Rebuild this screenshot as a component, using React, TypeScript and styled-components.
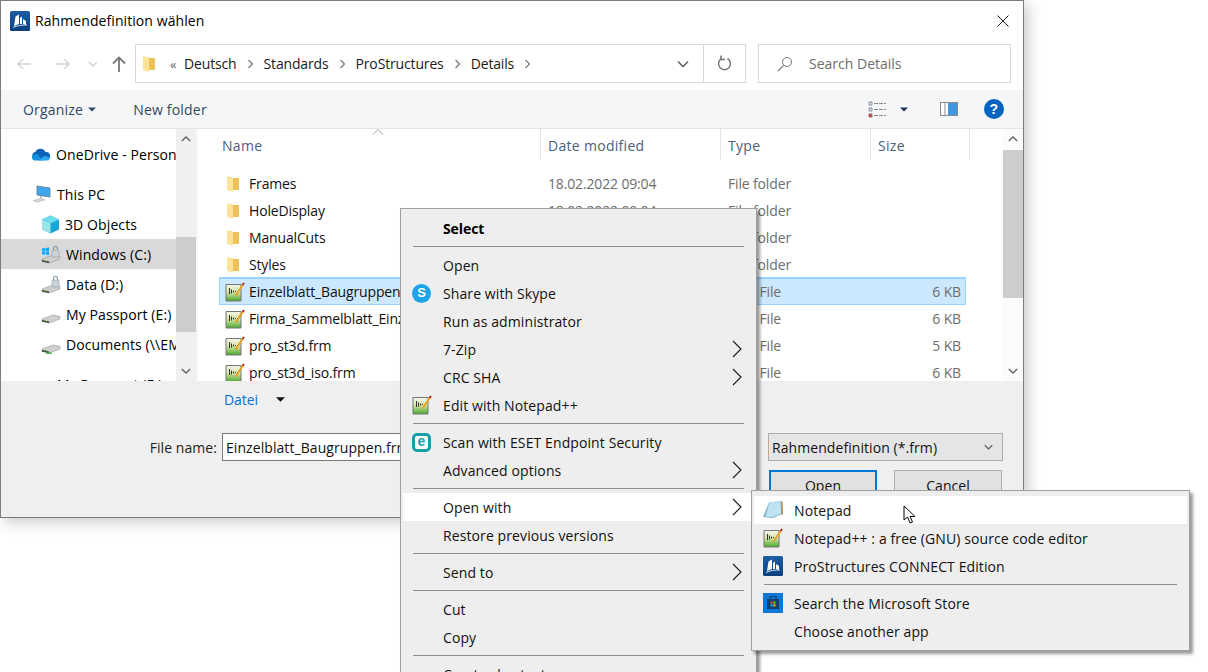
import React from 'react';
import styled, { createGlobalStyle } from 'styled-components';

const GlobalStyle = createGlobalStyle`
  html, body {
    margin: 0;
    padding: 0;
    background: #fff;
    overflow: hidden;
  }
  body {
    font-family: "Open Sans", "Liberation Sans", sans-serif;
    font-size: 14px;
    color: #000;
  }
  * { box-sizing: border-box; }
`;

const Screen = styled.div`
  position: relative;
  width: 1208px;
  height: 672px;
  overflow: hidden;
  background: #fff;
`;

/* ---- dialog ---- */
const Dialog = styled.div`
  width: 1024px;
  height: 518px;
  border: 1px solid #7c7c7c;
  background: #fff;
  box-shadow: 4px 4px 14px rgba(0, 0, 0, 0.22);
  display: flex;
  flex-direction: column;
`;
const TitleBar = styled.div`
  height: 39px;
  flex: none;
  display: flex;
  align-items: center;
  padding: 0 14px 0 9px;
  gap: 5px;
  letter-spacing: 0.08px;
`;
const TitleText = styled.div`
  flex: 1;
  font-size: 14px;
`;
const NavRow = styled.div`
  height: 50px;
  flex: none;
  display: flex;
  align-items: flex-start;
  padding: 4px 12px 0 0;
`;
const NavButtons = styled.div`
  width: 134px;
  height: 39px;
  flex: none;
  display: flex;
  align-items: center;
  padding: 1px 0 0 15px;
`;
const AddressBar = styled.div`
  width: 611px;
  height: 39px;
  flex: none;
  border: 1px solid #d9d9d9;
  display: flex;
  align-items: center;
  padding-left: 5px;
`;
const Crumbs = styled.div`
  flex: 1;
  display: flex;
  align-items: center;
  font-size: 14px;
  color: #1a1a1a;
  letter-spacing: -0.15px;
`;
const Chevrons = styled.span`
  color: #666;
  font-size: 13px;
  width: 28px;
  padding-left: 14px;
`;
const CrumbSep = styled.span`
  width: 27px;
  display: flex;
  justify-content: center;
`;
const AddressTail = styled.div`
  width: 44px;
  padding-left: 4px;
  display: flex;
  justify-content: center;
`;
const RefreshCell = styled.div`
  width: 42px;
  height: 37px;
  border-left: 1px solid #d9d9d9;
  display: flex;
  align-items: center;
  justify-content: center;
`;
const SearchBox = styled.div`
  width: 253px;
  height: 39px;
  margin-left: 12px;
  flex: none;
  border: 1px solid #d9d9d9;
  display: flex;
  align-items: center;
  padding-left: 18px;
  gap: 16px;
  color: #6d6d6d;
  font-size: 14px;
  letter-spacing: 0;
`;
const CommandBar = styled.div`
  height: 39px;
  flex: none;
  background: #f5f6f7;
  border-bottom: 1px solid #e3e4e5;
  display: flex;
  align-items: center;
  padding: 0 19px 0 22px;
  color: #2f4a68;
  font-size: 14px;
  letter-spacing: 0.2px;
`;
const CommandItem = styled.div<{ $gap?: number }>`
  display: flex;
  align-items: center;
  gap: 5px;
  margin-right: ${p => p.$gap ?? 0}px;
`;
const Spring = styled.div`
  flex: 1;
`;
const Main = styled.div`
  height: 252px;
  flex: none;
  display: flex;
  overflow: hidden;
`;
const NavPane = styled.div`
  width: 175px;
  flex: none;
  padding-top: 10px;
  font-size: 14px;
  letter-spacing: 0.1px;
`;
const NavItem = styled.div<{ $indent: number; $active?: boolean; $gapTop?: boolean }>`
  height: 30px;
  display: flex;
  align-items: center;
  white-space: nowrap;
  overflow: hidden;
  padding-left: ${p => p.$indent}px;
  gap: 5px;
  margin-top: ${p => (p.$gapTop ? 10 : 0)}px;
  background: ${p => (p.$active ? '#d9d9d9' : 'transparent')};
  svg { flex: none; }
`;
const Scrollbar = styled.div<{ $track: string }>`
  width: 20px;
  flex: none;
  background: ${p => p.$track};
  display: flex;
  flex-direction: column;
  align-items: stretch;
`;
const ScrollArrow = styled.div`
  height: 20px;
  flex: none;
  display: flex;
  align-items: center;
  justify-content: center;
`;
const ScrollThumb = styled.div<{ $top: number; $height: number }>`
  margin-top: ${p => p.$top}px;
  height: ${p => p.$height}px;
  flex: none;
  background: #cdcdcd;
`;
const ScrollFill = styled.div`
  flex: 1;
`;
const FileList = styled.div`
  position: relative;
  flex: 1;
  font-size: 14px;
  letter-spacing: -0.15px;
  border-left: 2px solid #f6f6f6;
`;
const HeaderRow = styled.div`
  height: 31px;
  display: grid;
  grid-template-columns: 342px 180px 150px 100px;
  color: #4c607a;
  margin-bottom: 10px;
  letter-spacing: 0.3px;
`;
const HeaderCell = styled.div<{ $first?: boolean; $last?: boolean }>`
  display: flex;
  align-items: center;
  padding-left: ${p => (p.$first ? 24 : 7)}px;
  padding-top: 2px;
  border-left: ${p => (p.$first ? 'none' : '1px solid #e5e5e5')};
  border-right: ${p => (p.$last ? '1px solid #e5e5e5' : 'none')};
`;
const SortCaret = styled.svg`
  position: absolute;
  left: 174px;
  top: 0;
`;
const FileRow = styled.div<{ $selected?: boolean }>`
  height: 27px;
  width: 747px;
  margin-left: 21px;
  padding: 0 5px 0 6px;
  display: grid;
  grid-template-columns: 24px 299px 180px 1fr 50px;
  align-items: center;
  white-space: nowrap;
  background: ${p => (p.$selected ? '#cce8ff' : 'transparent')};
  box-shadow: ${p => (p.$selected ? 'inset 0 0 0 1px #99d1ff, 0 -1px 0 #99d1ff' : 'none')};
`;
const FileName = styled.div`
  color: #111;
  overflow: hidden;
`;
const FileMeta = styled.div<{ $right?: boolean }>`
  color: #6d6d6d;
  text-align: ${p => (p.$right ? 'right' : 'left')};
`;
const Footer = styled.div`
  flex: 1;
  background: #efefef;
  font-size: 14px;
  letter-spacing: 0.07px;
  padding-top: 7px;
`;
const FooterLink = styled.div`
  height: 22px;
  display: flex;
  align-items: center;
  margin-left: 223px;
  gap: 18px;
  color: #0a6fd8;
  letter-spacing: -0.1px;
`;
const FileNameRow = styled.div`
  display: flex;
  align-items: center;
  margin-top: 23px;
  height: 28px;
`;
const FieldLabel = styled.div`
  width: 221px;
  padding-right: 5px;
  text-align: right;
  color: #222;
`;
const FieldInput = styled.div`
  width: 530px;
  height: 28px;
  flex: none;
  border: 1px solid #7a7a7a;
  background: #fff;
  padding-left: 3px;
  display: flex;
  align-items: center;
  color: #111;
`;
const TypeSelect = styled.div`
  width: 235px;
  height: 28px;
  margin-left: 16px;
  flex: none;
  border: 1px solid #adadad;
  background: #e5e5e5;
  display: flex;
  align-items: center;
  justify-content: space-between;
  padding: 0 9px 0 3px;
  color: #111;
`;
const ButtonRow = styled.div`
  display: flex;
  margin: 9px 0 0 768px;
  gap: 17px;
`;
const DialogButton = styled.div<{ $primary?: boolean }>`
  width: 108px;
  height: 30px;
  background: #e1e1e1;
  border: ${p => (p.$primary ? '2px solid #0078d7' : '1px solid #adadad')};
  display: flex;
  align-items: center;
  justify-content: center;
  color: #111;
`;

/* ---- context menus ---- */
const Menu = styled.div<{ $x: number; $y: number; $w: number }>`
  position: absolute;
  left: ${p => p.$x}px;
  top: ${p => p.$y}px;
  width: ${p => p.$w}px;
  background: #eeeeee;
  border: 1px solid #a0a0a0;
  padding: 5px 2px;
  box-shadow: 3px 3px 3px rgba(0, 0, 0, 0.4);
  font-size: 14px;
  letter-spacing: 0.1px;
  color: #111;
`;
const MenuRow = styled.div<{ $hot?: boolean; $bold?: boolean }>`
  height: 28px;
  display: flex;
  align-items: center;
  white-space: nowrap;
  background: ${p => (p.$hot ? '#fff' : 'transparent')};
  font-weight: ${p => (p.$bold ? 700 : 400)};
  color: ${p => (p.$bold ? '#000' : 'inherit')};
  letter-spacing: ${p => (p.$bold ? '-0.1px' : 'inherit')};
`;
const MenuIcon = styled.div`
  width: 40px;
  padding-left: 9px;
  flex: none;
  display: flex;
  align-items: center;
`;
const MenuLabel = styled.div`
  flex: 1;
`;
const MenuArrow = styled.svg`
  margin-right: 12px;
  flex: none;
`;
const MenuSep = styled.div`
  height: 1px;
  background: #8f8f8f;
  margin: 4px 10px 4px 10px;
`;
const Badge = styled.div<{ $bg: string; $radius: number }>`
  width: 19px;
  height: 19px;
  border-radius: ${p => p.$radius}px;
  background: ${p => p.$bg};
  color: #fff;
  font-family: "Liberation Sans", sans-serif;
  font-weight: 700;
  font-size: 13px;
  line-height: 18px;
  text-align: center;
  letter-spacing: 0;
`;
const EsetBadge = styled(Badge)`
  background: #fff;
  border: 3px solid #18a0a8;
  color: #18a0a8;
  line-height: 11px;
  font-size: 14px;
`;
const Pointer = styled.svg`
  position: absolute;
  left: 903px;
  top: 505px;
`;

/* ---- drawn icons ---- */
const Folder = () => (
  <svg width="14" height="18" viewBox="0 0 14 18" style={{ marginLeft: 1 }}>
    <path d="M1 2h5l2 2h5v11H1z" fill="#f3cd6b" />
    <path d="M1 1l6 2v14l-6-2z" fill="#fde398" />
    <path d="M7 3h6v12H7z" fill="#eec15a" />
  </svg>
);

const FrmIcon = ({ size = 20 }: { size?: number }) => (
  <svg width={size} height={size} viewBox="0 0 20 20">
    <defs>
      <linearGradient id="frmFill" x1="0" y1="0" x2="0" y2="1">
        <stop offset="0" stopColor="#f4f4ee" />
        <stop offset="0.45" stopColor="#d8e8a8" />
        <stop offset="1" stopColor="#49a62e" />
      </linearGradient>
    </defs>
    <path d="M1 2.500h15v16.500H1z" fill="url(#frmFill)" stroke="#777" />
    <path d="M4.500 6v6M6.500 7.500v4M8.500 8.500v2M10.500 9v1" stroke="#333" strokeWidth="1" />
    <path d="M10.500 13.500L18 2.500" stroke="#e8a020" strokeWidth="2" />
    <path d="M17.500 3L19 1" stroke="#b02a20" strokeWidth="2" />
  </svg>
);

const ProLogo = () => (
  <svg width="20" height="20" viewBox="0 0 20 20">
    <defs>
      <linearGradient id="proFill" x1="0" y1="0" x2="0" y2="1">
        <stop offset="0" stopColor="#1d5ea6" />
        <stop offset="1" stopColor="#0c3f80" />
      </linearGradient>
    </defs>
    <rect width="20" height="20" rx="1.500" fill="url(#proFill)" />
    <path d="M4 15l1.500-9.500L9 3.500v9.500zM10 13V7l2-1.500V13zM13 13V8l3 2v4z" fill="#fff" />
    <path d="M3 16.500c4-2 9-2.600 14-2.500" stroke="#cfe0f2" strokeWidth="1" fill="none" />
  </svg>
);

const OneDrive = () => (
  <svg width="21" height="14" viewBox="0 0 21 14">
    <path d="M6 13a4 4 0 0 1-.6-7.900A5.500 5.500 0 0 1 15.400 5a4 4 0 0 1 1.200 8z" fill="#0a62b8" />
    <path d="M4 13.500a3.200 3.200 0 0 1 1-6.200h2.500l6 6.200z" fill="#1490df" />
    <path d="M9 13.500l5-4.500 4 .5a2.200 2.200 0 0 1 .4 4z" fill="#28a8ea" />
  </svg>
);

const ThisPc = () => (
  <svg width="20" height="18" viewBox="0 0 20 18">
    <path d="M5 1l13 2v9l-13-2z" fill="#3fa6ec" stroke="#5b7f99" strokeWidth=".8" />
    <path d="M1 15.500l8-2 4 1.300-8 2.400z" fill="#d6d6d6" stroke="#aaa" strokeWidth=".5" />
    <path d="M9 11v2" stroke="#888" />
  </svg>
);

const Cube = () => (
  <svg width="19" height="19" viewBox="0 0 19 19">
    <path d="M9.500 .5L18 4.500v10l-8.500 4-8.500-4v-10z" fill="#1aa6d6" />
    <path d="M9.500 .5L18 4.500 9.500 8.500 1 4.500z" fill="#6fdcee" />
    <path d="M1 4.500l8.500 4v10l-8.500-4z" fill="#9ce6ea" />
  </svg>
);

const Drive = ({ lock, windows, net }: { lock?: boolean; windows?: boolean; net?: boolean }) => (
  <svg width="20" height="19" viewBox="0 0 20 19">
    <path d="M1 14l11-4 7 1.500v2.500L8 18l-7-1.500z" fill="#cfcfcf" stroke="#8a8a8a" strokeWidth=".5" />
    <path d="M1 15v1.600L8 18v-1.600z" fill="#3c3c3c" />
    <path d="M3 15.500l3 .5" stroke={net ? '#3fb54a' : '#7cc242'} strokeWidth="1" />
    {net && <path d="M5 17.500h6v1.400H5z" fill="#3fb54a" />}
    {lock && (
      <g>
        <path d="M12.500 5V3.400a2 2 0 0 1 4 0V5" stroke="#8da0ad" fill="none" strokeWidth="1.200" />
        <rect x="11" y="5" width="7" height="7" rx=".8" fill="#c9d3da" stroke="#8da0ad" strokeWidth=".6" />
      </g>
    )}
    {windows && (
      <path d="M1 3.400l3-.4v3H1zM4.600 3l3.400-.5V6H4.600zM1 6.600h3v3l-3-.4zM4.600 6.600H8v3.500l-3.400-.5z" fill="#12a4ee" />
    )}
  </svg>
);

const NotepadIcon = () => (
  <svg width="20" height="20" viewBox="0 0 20 20">
    <path d="M6 2.500L18 1l1 13-9 4-10-1z" fill="#7fb6cc" />
    <path d="M6.500 2.500L17.500 1.200l.8 12.300-8.800 3.500-7-.5z" fill="#bfe3f0" />
    <path d="M18 1l1.500 1 .5 12-1.500 1z" fill="#a8824f" />
  </svg>
);

const StoreIcon = () => (
  <svg width="20" height="20" viewBox="0 0 20 20">
    <rect width="20" height="20" fill="#0a78d6" />
    <path d="M4 6h12v10H4z" fill="#123f74" />
    <path d="M7 6V3.500h6V6" stroke="#123f74" fill="none" strokeWidth="1.200" />
    <path d="M7.500 8.500h2.200v2.200H7.500z" fill="#f25022" />
    <path d="M10.300 8.500h2.200v2.200h-2.200z" fill="#7fba00" />
    <path d="M7.500 11.300h2.200v2.200H7.500z" fill="#00a4ef" />
    <path d="M10.300 11.300h2.200v2.200h-2.200z" fill="#ffb900" />
  </svg>
);

const ChevronRight = ({ color = '#777' }: { color?: string }) => (
  <svg width="7" height="10" viewBox="0 0 7 10">
    <path d="M1.500 1l4 4-4 4" fill="none" stroke={color} strokeWidth="1.200" />
  </svg>
);

const ChevronV = ({ up, color = '#666', width = 12 }: { up?: boolean; color?: string; width?: number }) => (
  <svg width={width} height="8" viewBox="0 0 12 8">
    <path d={up ? 'M1 6.500l5-5 5 5' : 'M1 1.500l5 5 5-5'} fill="none" stroke={color} strokeWidth="1.600" />
  </svg>
);

const SubArrow = () => (
  <MenuArrow width="10" height="18" viewBox="0 0 10 18">
    <path d="M1 1l8 8-8 8" fill="none" stroke="#1a1a1a" strokeWidth="1.100" />
  </MenuArrow>
);

const DownCaret = ({ color, width = 10 }: { color: string; width?: number }) => (
  <svg width={width} height="5" viewBox="0 0 10 5">
    <path d="M0 0h10L5 5z" fill={color} />
  </svg>
);

const HArrow = ({ left, ml }: { left?: boolean; ml: number }) => (
  <svg width="16" height="12" viewBox="0 0 16 12" style={{ marginLeft: ml }}>
    <path d={left ? 'M15 6H2M7 1L2 6l5 5' : 'M1 6h13M9 1l5 5-5 5'} fill="none" stroke="#d2d2d2" strokeWidth="1.400" />
  </svg>
);

const navItems = [
  { label: 'OneDrive - Personal', indent: 29, icon: <OneDrive /> },
  { label: 'This PC', indent: 31, icon: <ThisPc />, gapTop: true },
  { label: '3D Objects', indent: 40, icon: <Cube /> },
  { label: 'Windows (C:)', indent: 40, icon: <Drive lock windows />, active: true },
  { label: 'Data (D:)', indent: 40, icon: <Drive lock /> },
  { label: 'My Passport (E:)', indent: 40, icon: <Drive /> },
  { label: 'Documents (\\\\EMEA)', indent: 40, icon: <Drive net /> },
  { label: 'My Passport (E:)', indent: 31, icon: <Drive />, gapTop: true },
];

const files = [
  { name: 'Frames', date: '18.02.2022 09:04', type: 'File folder', size: '', folder: true },
  { name: 'HoleDisplay', date: '18.02.2022 09:04', type: 'File folder', size: '', folder: true },
  { name: 'ManualCuts', date: '18.02.2022 09:04', type: 'File folder', size: '', folder: true },
  { name: 'Styles', date: '18.02.2022 09:04', type: 'File folder', size: '', folder: true },
  { name: 'Einzelblatt_Baugruppen.frm', date: '18.02.2022 09:04', type: 'FRM File', size: '6 KB', selected: true },
  { name: 'Firma_Sammelblatt_Einzelteile.frm', date: '18.02.2022 09:04', type: 'FRM File', size: '6 KB' },
  { name: 'pro_st3d.frm', date: '18.02.2022 09:04', type: 'FRM File', size: '5 KB' },
  { name: 'pro_st3d_iso.frm', date: '18.02.2022 09:04', type: 'FRM File', size: '6 KB' },
];

type Entry =
  | 'sep'
  | { label: string; icon?: React.ReactNode; sub?: boolean; hot?: boolean; bold?: boolean };

const contextMenu: Entry[] = [
  { label: 'Select', bold: true },
  'sep',
  { label: 'Open' },
  { label: 'Share with Skype', icon: <Badge $bg="#1ba5e8" $radius={10}>S</Badge> },
  { label: 'Run as administrator' },
  { label: '7-Zip', sub: true },
  { label: 'CRC SHA', sub: true },
  { label: 'Edit with Notepad++', icon: <FrmIcon /> },
  'sep',
  { label: 'Scan with ESET Endpoint Security', icon: <EsetBadge $bg="#fff" $radius={5}>e</EsetBadge> },
  { label: 'Advanced options', sub: true },
  'sep',
  { label: 'Open with', sub: true, hot: true },
  { label: 'Restore previous versions' },
  'sep',
  { label: 'Send to', sub: true },
  'sep',
  { label: 'Cut' },
  { label: 'Copy' },
  'sep',
  { label: 'Create shortcut' },
];

const openWithMenu: Entry[] = [
  { label: 'Notepad', icon: <NotepadIcon />, hot: true },
  { label: 'Notepad++ : a free (GNU) source code editor', icon: <FrmIcon /> },
  { label: 'ProStructures CONNECT Edition', icon: <ProLogo /> },
  'sep',
  { label: 'Search the Microsoft Store', icon: <StoreIcon /> },
  { label: 'Choose another app' },
];

const renderEntries = (entries: Entry[]) =>
  entries.map((entry, i) =>
    entry === 'sep' ? (
      <MenuSep key={i} />
    ) : (
      <MenuRow key={i} $hot={entry.hot} $bold={entry.bold}>
        <MenuIcon>{entry.icon}</MenuIcon>
        <MenuLabel>{entry.label}</MenuLabel>
        {entry.sub && <SubArrow />}
      </MenuRow>
    )
  );

export default function App() {
  return (
    <Screen>
      <GlobalStyle />
      <Dialog>
        <TitleBar>
          <ProLogo />
          <TitleText>Rahmendefinition wählen</TitleText>
          <svg width="12" height="12" viewBox="0 0 12 12">
            <path d="M.5.5l11 11M11.500.5l-11 11" stroke="#222" strokeWidth="1" />
          </svg>
        </TitleBar>

        <NavRow>
          <NavButtons>
            <HArrow left ml={0} />
            <HArrow ml={23} />
            <svg width="10" height="6" viewBox="0 0 10 6" style={{ marginLeft: 17 }}>
              <path d="M1 1l4 4 4-4" fill="none" stroke="#d2d2d2" strokeWidth="1.400" />
            </svg>
            <svg width="14" height="16" viewBox="0 0 14 16" style={{ marginLeft: 14 }}>
              <path d="M7 16V2M1 7.500L7 1.500l6 6" fill="none" stroke="#777" strokeWidth="1.800" />
            </svg>
          </NavButtons>
          <AddressBar>
            <Folder />
            <Crumbs>
              <Chevrons>«</Chevrons>
              Deutsch
              <CrumbSep><ChevronRight /></CrumbSep>
              Standards
              <CrumbSep><ChevronRight /></CrumbSep>
              ProStructures
              <CrumbSep><ChevronRight /></CrumbSep>
              Details
              <CrumbSep><ChevronRight /></CrumbSep>
            </Crumbs>
            <AddressTail><ChevronV /></AddressTail>
            <RefreshCell>
              <svg width="15" height="17" viewBox="0 0 15 17">
                <path d="M10.500 3.500a6 6 0 1 1-6 0" fill="none" stroke="#777" strokeWidth="1.500" />
                <path d="M4 .5v4h4" fill="none" stroke="#777" strokeWidth="1.500" />
              </svg>
            </RefreshCell>
          </AddressBar>
          <SearchBox>
            <svg width="16" height="16" viewBox="0 0 16 16">
              <circle cx="10" cy="6" r="4.500" fill="none" stroke="#777" strokeWidth="1" />
              <path d="M6.700 9.300L1 15" stroke="#777" strokeWidth="1.200" />
            </svg>
            Search Details
          </SearchBox>
        </NavRow>

        <CommandBar>
          <CommandItem $gap={37}>Organize <DownCaret color="#2f4a68" width={8} /></CommandItem>
          <CommandItem>New folder</CommandItem>
          <Spring />
          <CommandItem $gap={32}>
            <svg width="19" height="17" viewBox="0 0 19 17">
              <path d="M1 1h3v3H1zM1 7h3v3H1z" fill="#dfe6ee" stroke="#6f7f90" strokeWidth=".8" />
              <path d="M1 13h3v3H1z" fill="#d9534f" stroke="#8a5050" strokeWidth=".8" />
              <path d="M6 2.500h12M6 8.500h12M6 14.500h12" stroke="#8a8a8a" strokeDasharray="4 1" />
            </svg>
            <span style={{ width: 3 }} />
            <DownCaret color="#1e395b" width={8} />
          </CommandItem>
          <CommandItem $gap={26}>
            <svg width="18" height="14" viewBox="0 0 18 14">
              <rect x=".5" y=".5" width="17" height="13" fill="#fff" stroke="#8a8a8a" />
              <rect x="8" y="1" width="9" height="12" fill="#3f97e0" />
              <path d="M5 1v12" stroke="#8a8a8a" />
            </svg>
          </CommandItem>
          <svg width="20" height="20" viewBox="0 0 20 20">
            <circle cx="10" cy="10" r="10" fill="#0563c1" />
            <text x="10" y="15" textAnchor="middle" fill="#fff" fontSize="14" fontWeight="700" fontFamily="Liberation Sans, sans-serif">?</text>
          </svg>
        </CommandBar>

        <Main>
          <NavPane>
            {navItems.map((item, i) => (
              <NavItem key={i} $indent={item.indent} $active={item.active} $gapTop={item.gapTop}>
                {item.icon}
                {item.label}
              </NavItem>
            ))}
          </NavPane>
          <Scrollbar $track="#f0f0f0">
            <ScrollArrow><ChevronV up color="#606060" width={10} /></ScrollArrow>
            <ScrollThumb $top={88} $height={95} />
            <ScrollFill />
            <ScrollArrow><ChevronV color="#606060" width={10} /></ScrollArrow>
          </Scrollbar>
          <FileList>
            <SortCaret width="12" height="6" viewBox="0 0 12 6">
              <path d="M1 5.500l5-5 5 5" fill="none" stroke="#a0a0a0" />
            </SortCaret>
            <HeaderRow>
              <HeaderCell $first>Name</HeaderCell>
              <HeaderCell>Date modified</HeaderCell>
              <HeaderCell>Type</HeaderCell>
              <HeaderCell $last>Size</HeaderCell>
            </HeaderRow>
            {files.map(file => (
              <FileRow key={file.name} $selected={file.selected}>
                {file.folder ? <Folder /> : <FrmIcon />}
                <FileName>{file.name}</FileName>
                <FileMeta>{file.date}</FileMeta>
                <FileMeta>{file.type}</FileMeta>
                <FileMeta $right>{file.size}</FileMeta>
              </FileRow>
            ))}
          </FileList>
          <Scrollbar $track="#fbfbfb">
            <ScrollArrow><ChevronV up color="#606060" width={10} /></ScrollArrow>
            <ScrollThumb $top={1} $height={148} />
            <ScrollFill />
            <ScrollArrow><ChevronV color="#606060" width={10} /></ScrollArrow>
          </Scrollbar>
        </Main>

        <Footer>
          <FooterLink>Datei <DownCaret color="#111" width={9} /></FooterLink>
          <FileNameRow>
            <FieldLabel>File name:</FieldLabel>
            <FieldInput>Einzelblatt_Baugruppen.frm</FieldInput>
            <TypeSelect>
              Rahmendefinition (*.frm)
              <ChevronV color="#555" width={9} />
            </TypeSelect>
          </FileNameRow>
          <ButtonRow>
            <DialogButton $primary>Open</DialogButton>
            <DialogButton>Cancel</DialogButton>
          </ButtonRow>
        </Footer>
      </Dialog>

      <Menu $x={400} $y={208} $w={357}>{renderEntries(contextMenu)}</Menu>
      <Menu $x={751} $y={490} $w={439}>{renderEntries(openWithMenu)}</Menu>

      <Pointer width="13" height="19" viewBox="0 0 13 19">
        <path d="M1 1v14l3.500-3 2.500 6 2.500-1-2.500-5.500H12z" fill="#fff" stroke="#000" strokeWidth="1" />
      </Pointer>
    </Screen>
  );
}
